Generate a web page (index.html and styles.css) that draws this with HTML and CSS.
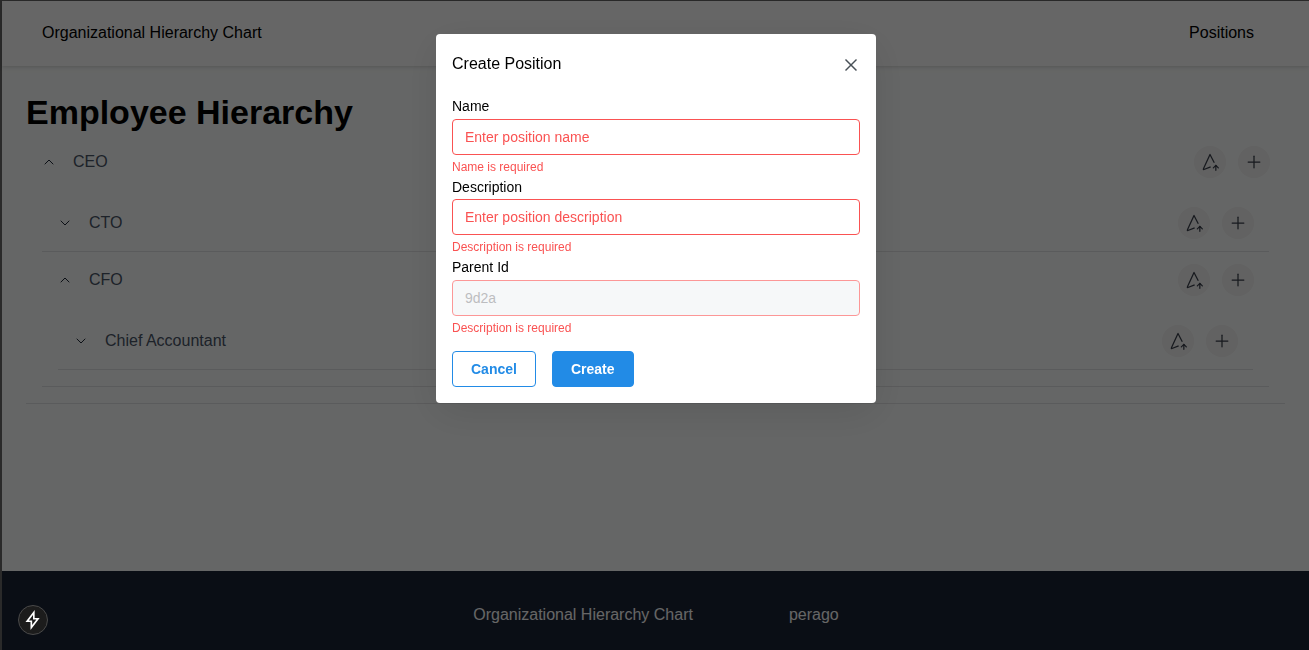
FILE: index.html
```html
<!DOCTYPE html>
<html lang="en">
<head>
	<meta charset="utf-8">
	<title>Organizational Hierarchy Chart</title>
	<link rel="stylesheet" href="styles.css">
</head>

<body>
	<div id="app">
		<header class="topbar">
			<span>Organizational Hierarchy Chart</span>
			<a class="topbar-link">Positions</a>
		</header>

		<main class="content">
			<h1>Employee Hierarchy</h1>

			<div class="item">
				<div class="row">
					<svg class="chevron" viewBox="0 0 24 24"><path d="M6 15l6 -6l6 6"/></svg>
					<span class="row-name">CEO</span>
					<button class="round-btn"><svg viewBox="0 0 24 24"><path d="M16.800 12.400l-4.800 -9.400l-8 17.300c-.1 .2 0 .4 .1 .6c.2 .1 .4 .2 .6 .1l7.300 -2.900l.3 .1"/><path d="M19 22v-6"/><path d="M22 19l-3 -3l-3 3"/></svg></button>
					<button class="round-btn"><svg viewBox="0 0 24 24"><path d="M12 5v14"/><path d="M5 12h14"/></svg></button>
				</div>
				<div class="panel">
					<div class="item">
						<div class="row">
							<svg class="chevron" viewBox="0 0 24 24"><path d="M6 9l6 6l6 -6"/></svg>
							<span class="row-name">CTO</span>
							<button class="round-btn"><svg viewBox="0 0 24 24"><path d="M16.800 12.400l-4.800 -9.400l-8 17.300c-.1 .2 0 .4 .1 .6c.2 .1 .4 .2 .6 .1l7.300 -2.900l.3 .1"/><path d="M19 22v-6"/><path d="M22 19l-3 -3l-3 3"/></svg></button>
							<button class="round-btn"><svg viewBox="0 0 24 24"><path d="M12 5v14"/><path d="M5 12h14"/></svg></button>
						</div>
					</div>
					<div class="item">
						<div class="row">
							<svg class="chevron" viewBox="0 0 24 24"><path d="M6 15l6 -6l6 6"/></svg>
							<span class="row-name">CFO</span>
							<button class="round-btn"><svg viewBox="0 0 24 24"><path d="M16.800 12.400l-4.800 -9.400l-8 17.300c-.1 .2 0 .4 .1 .6c.2 .1 .4 .2 .6 .1l7.300 -2.900l.3 .1"/><path d="M19 22v-6"/><path d="M22 19l-3 -3l-3 3"/></svg></button>
							<button class="round-btn"><svg viewBox="0 0 24 24"><path d="M12 5v14"/><path d="M5 12h14"/></svg></button>
						</div>
						<div class="panel">
							<div class="item">
								<div class="row">
									<svg class="chevron" viewBox="0 0 24 24"><path d="M6 9l6 6l6 -6"/></svg>
									<span class="row-name">Chief Accountant</span>
									<button class="round-btn"><svg viewBox="0 0 24 24"><path d="M16.800 12.400l-4.800 -9.400l-8 17.300c-.1 .2 0 .4 .1 .6c.2 .1 .4 .2 .6 .1l7.300 -2.900l.3 .1"/><path d="M19 22v-6"/><path d="M22 19l-3 -3l-3 3"/></svg></button>
									<button class="round-btn"><svg viewBox="0 0 24 24"><path d="M12 5v14"/><path d="M5 12h14"/></svg></button>
								</div>
							</div>
						</div>
					</div>
				</div>
			</div>
		</main>

		<footer class="footer">
			<span>Organizational Hierarchy Chart</span>
			<span>perago</span>
		</footer>
	</div>

	<div class="overlay">
		<form class="modal">
			<div class="modal-head">
				<span>Create Position</span>
				<svg class="close" viewBox="0 0 16 16"><path d="M2.500 2.500l11 11"/><path d="M13.500 2.500l-11 11"/></svg>
			</div>

			<div class="field">
				<label for="name">Name</label>
				<input type="text" id="name" placeholder="Enter position name">
				<p class="error">Name is required</p>
			</div>
			<div class="field">
				<label for="description">Description</label>
				<input type="text" id="description" placeholder="Enter position description">
				<p class="error">Description is required</p>
			</div>
			<div class="field">
				<label for="parent">Parent Id</label>
				<input type="text" id="parent" value="9d2a" disabled>
				<p class="error">Description is required</p>
			</div>

			<div class="actions">
				<button type="button" class="btn btn-outline">Cancel</button>
				<button type="button" class="btn btn-filled">Create</button>
			</div>
		</form>
	</div>

	<div class="dev-badge">
		<svg viewBox="1 0 24 24"><path d="M14 3v7.500h5l-8 10.500v-7.500H6z"/></svg>
	</div>
</body>

</html>
```

FILE: styles.css
```css
html {
	box-sizing: border-box;
}
*,
*::before,
*::after {
	box-sizing: inherit;
}

body {
	background-color: #696969;
	color: #000;
	font-family: "Liberation Sans", Arial, sans-serif;
	font-size: 16px;
	height: 650px;
	margin: 0;
	overflow: hidden;
	padding: 0;
}

#app {
	display: flex;
	flex-direction: column;
	height: 650px;
	padding: 1px 0 0 2px;
}

.topbar {
	align-items: center;
	background-color: #fff;
	box-shadow: 0 1px 3px rgba(0, 0, 0, 0.1), 0 2px 6px rgba(0, 0, 0, 0.06);
	display: flex;
	flex: none;
	height: 65px;
	justify-content: space-between;
	padding: 0 55px 2px 40px;
	position: relative;
}

.content {
	background-color: #fdfffe;
	flex: 1;
	padding: 26px 24px 0;
}

h1 {
	font-size: 34px;
	line-height: 40px;
	margin: 0 0 1px;
}

.item {
	border-bottom: 1px solid #e2e4e6;
}
.item + .item {
	margin-top: -1px;
}

.row {
	align-items: center;
	color: #4a5568;
	display: flex;
	gap: 12px;
	height: 57px;
	padding: 0 15px 0 15px;
}

.row-name {
	flex: 1;
}

.chevron {
	fill: none;
	height: 16px;
	margin-right: 4px;
	stroke: #1f2937;
	stroke-linecap: round;
	stroke-linejoin: round;
	stroke-width: 1.5;
	width: 16px;
}

.panel {
	padding: 4px 16px 16px;
}

.round-btn {
	align-items: center;
	background-color: #f4f4f4;
	border: 0;
	border-radius: 50%;
	display: flex;
	height: 32px;
	justify-content: center;
	padding: 0;
	width: 32px;
}
.round-btn svg {
	fill: none;
	height: 20px;
	stroke: #3a404c;
	stroke-linecap: round;
	stroke-linejoin: round;
	stroke-width: 1.5;
	width: 20px;
}

.footer {
	align-items: center;
	background-color: #1a2436;
	color: #fff;
	display: flex;
	flex: none;
	gap: 96px;
	height: 79px;
	justify-content: center;
	padding: 9px 0 0 1px;
}

.overlay {
	background-color: rgba(0, 0, 0, 0.6);
	display: flex;
	inset: 0;
	justify-content: center;
	padding: 34px 0 0 3px;
	position: fixed;
}

.modal {
	align-self: flex-start;
	background-color: #fff;
	border-radius: 4px;
	box-shadow: 0 10px 40px rgba(0, 0, 0, 0.1);
	padding: 16px;
	width: 440px;
}

.modal-head {
	align-items: center;
	display: flex;
	height: 28px;
	justify-content: space-between;
	margin-bottom: 18px;
}

.close {
	fill: none;
	height: 16px;
	margin: 1px 1px 0 0;
	stroke: #495057;
	stroke-width: 1.5;
	width: 16px;
}

.field {
	height: 80.5px;
}

label {
	display: block;
	font-size: 14px;
	line-height: 20px;
	margin-bottom: 2.5px;
}

input {
	border: 1px solid #fa5252;
	border-radius: 4px;
	color: #fa5252;
	display: block;
	font-family: inherit;
	font-size: 14px;
	height: 36px;
	outline: none;
	padding: 0 12px;
	width: 100%;
}
input::placeholder {
	color: #fa5252;
}
input:disabled {
	background-color: #f1f3f5;
	color: #909296;
	opacity: 0.6;
}

.error {
	color: #fa5252;
	font-size: 12px;
	line-height: 14px;
	margin: 5px 0 0;
}

.actions {
	display: flex;
	gap: 16px;
	margin-top: 13px;
}

.btn {
	border: 1px solid #228be6;
	border-radius: 4px;
	font-family: inherit;
	font-size: 14px;
	font-weight: 700;
	height: 36px;
	padding: 0 18px;
}
.btn-outline {
	background-color: #fff;
	color: #228be6;
}
.btn-filled {
	background-color: #228be6;
	color: #fff;
}

.dev-badge {
	align-items: center;
	background-color: #1c1c1c;
	border: 1px solid #4a4a4a;
	border-radius: 50%;
	bottom: 15px;
	display: flex;
	height: 30px;
	justify-content: center;
	left: 18px;
	position: fixed;
	width: 30px;
}
.dev-badge svg {
	fill: none;
	height: 20px;
	stroke: #fff;
	stroke-width: 2;
	width: 20px;
}
```
